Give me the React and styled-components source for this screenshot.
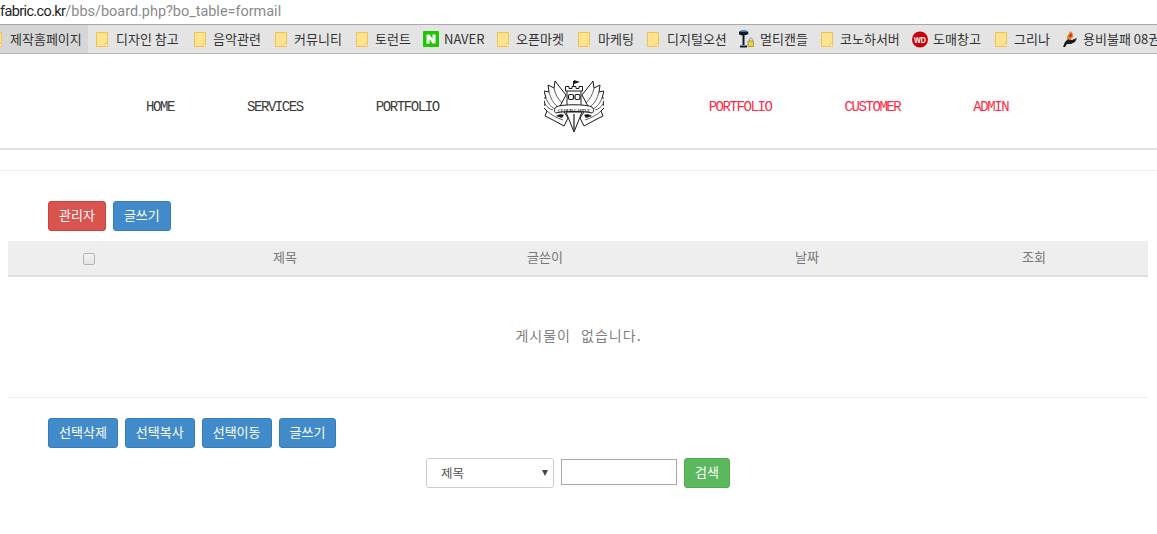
import React from "react";
import styled, { createGlobalStyle } from "styled-components";

const Global = createGlobalStyle`
  html, body { margin: 0; padding: 0; background: #fff; overflow: hidden; }
  body { font-family: "Noto Sans CJK KR", "Liberation Sans", sans-serif; }
  * { box-sizing: border-box; }
`;

const Page = styled.div`
  width: 1157px;
  height: 534px;
  overflow: hidden;
  display: flex;
  flex-direction: column;
`;

const AddressBar = styled.div`
  height: 25px;
  border-bottom: 1px solid #a9a9a9;
  font: 14.45px/24px "Roboto", "Open Sans", sans-serif;
  color: #8a8a8a;
  white-space: nowrap;
  b { font-weight: 400; color: #222; letter-spacing: -0.6px; }
`;

const BookmarkBar = styled.div`
  height: 29px;
  background: #e4e4e4;
  border-bottom: 1px solid #b4b4b4;
  display: flex;
  align-items: center;
  overflow: hidden;
  white-space: nowrap;
`;

const Bookmark = styled.div`
  flex: none;
  display: flex;
  align-items: center;
  height: 28px;
  width: ${(p) => p.$w}px;
  padding-left: ${(p) => p.$pad}px;
  gap: ${(p) => p.$gap}px;
  background: ${(p) => (p.$active ? "#d6d6d6" : "transparent")};
  font-size: 13px;
  color: #333;
  overflow: hidden;
`;

const BookmarkLabel = styled.span`
  display: block;
  line-height: 16px;
`;

const NavBar = styled.nav`
  height: 96px;
  border-bottom: 2px solid #e2e2e2;
  display: flex;
  align-items: center;
  padding: 8px 0 0 146px;
  gap: 73px;
`;

const NavLink = styled.a`
  font: 14px/16px "Liberation Mono", monospace;
  letter-spacing: -1.42px;
  color: ${(p) => (p.$accent ? "#ff2a45" : "#3c3c3c")};
  position: relative;
  top: 2px;
`;

const LogoBox = styled.div`
  flex: none;
  width: 60px;
  height: 52px;
  margin: 1px 32px 0;
`;

const Rule = styled.div`
  height: 1px;
  background: #eee;
  margin: ${(p) => p.$m};
`;

const Actions = styled.div`
  display: flex;
  gap: 7px;
  padding-left: 48px;
  margin-top: ${(p) => p.$top}px;
`;

const Button = styled.button`
  height: 30px;
  padding: 0 10px 2px;
  border-radius: 3px;
  border: 1px solid ${(p) => p.$border};
  background: ${(p) => p.$bg};
  color: #fff;
  font: 13px/16px "Noto Sans CJK KR", sans-serif;
  display: block;
`;

const Head = styled.div`
  margin: 10px 9px 0 8px;
  height: 36px;
  padding-bottom: 2px;
  background: #eee;
  border-bottom: 2px solid #ddd;
  display: grid;
  grid-template-columns: 162px 230px 290px 234px 220px;
  align-items: center;
  font-size: 13px;
  color: #777;
  text-align: center;
`;

const HeadCell = styled.div`
  line-height: 18px;
`;

const Check = styled.span`
  display: block;
  width: 12px;
  height: 12px;
  margin: 3px auto 0;
  border-radius: 2px;
  border: 1px solid #b5b5b5;
  background: linear-gradient(#f4f4f4, #e4e4e4);
`;

const Empty = styled.div`
  height: 120px;
  padding-bottom: 4px;
  display: flex;
  align-items: center;
  justify-content: center;
  font-size: 14px;
  letter-spacing: 1px;
  word-spacing: 6px;
  color: #808080;
`;

const SearchRow = styled.form`
  display: flex;
  align-items: flex-start;
  padding-left: 426px;
  margin-top: 10px;
  gap: 7px;
`;

const SelectBox = styled.div`
  width: 128px;
  height: 30px;
  border: 1px solid #ccc;
  border-radius: 3px;
  display: flex;
  align-items: center;
  justify-content: space-between;
  padding: 0 4px 2px 14px;
  font-size: 12.5px;
  color: #555;
  background: #fff;
`;

const Caret = styled.span`
  width: 0;
  height: 0;
  border-left: 3px solid transparent;
  border-right: 3px solid transparent;
  border-top: 6px solid #444;
  margin: 2px 1px 0 0;
`;

const TextInput = styled.input`
  width: 116px;
  height: 26px;
  margin-top: 1px;
  border: 1px solid #aaa;
  background: #fff;
  padding: 0;
`;

const IconSvg = styled.svg`
  display: block;
  flex: none;
  margin-left: ${(p) => p.$shift || 0}px;
`;

const Folder = ({ shift }) => (
  <IconSvg $shift={shift} width="12" height="15" viewBox="0 0 12 15">
    <path d="M.5.500h11v11l-2.500 3H.5z" fill="#ffe38f" stroke="#eac356" />
    <path d="M9 11.500h2.500v3H9z" fill="#fff3c4" stroke="#eac356" strokeWidth=".8" />
  </IconSvg>
);

const NaverIcon = () => (
  <IconSvg width="16" height="16" viewBox="0 0 16 16">
    <rect width="16" height="16" rx="1" fill="#1ec800" />
    <path d="M3.500 3.500h3l3 4.400V3.500h3v9h-3l-3-4.400v4.400h-3z" fill="#fff" />
  </IconSvg>
);

const KeyIcon = () => (
  <IconSvg width="15" height="19" viewBox="0 0 15 19">
    <path d="M0 2.500h9M0 2.500c1 2.500 8 2.500 9 0M4.500 3v12M1 16.500h7" fill="none" stroke="#0c1c2c" strokeWidth="2" />
    <path d="M1 1.500C2 .5 7 .5 8 1.500" fill="none" stroke="#1b5a8a" />
    <rect x="9" y="11" width="5.500" height="5.500" fill="#eed23c" stroke="#96821e" strokeWidth=".7" />
    <path d="M10.300 11V9.500a1.500 1.500 0 0 1 3 0V11" fill="none" stroke="#999" />
  </IconSvg>
);

const WdIcon = () => (
  <IconSvg width="16" height="17" viewBox="0 0 16 17">
    <circle cx="8" cy="8.500" r="8" fill="#c8000a" />
    <text x="8" y="11.500" textAnchor="middle" fontSize="8.500" fontWeight="700" fontFamily="Liberation Sans, sans-serif" fill="#fff" textLength="12" lengthAdjust="spacingAndGlyphs">WD</text>
  </IconSvg>
);

const FireIcon = () => (
  <IconSvg width="16" height="18" viewBox="0 0 16 18">
    <path d="M1 17l2-5 3-3 4 1 5-2-2 4-4 2-4 0-2 3z" fill="#1a1a1a" />
    <path d="M5 9C4 6 7 5 8 1c1 1 4 2 3 6-1 2-4 3-6 2z" fill="#e8862a" />
    <path d="M7 7c0-2 1-2 2-4 1 1 1 3 0 4z" fill="#c22" />
  </IconSvg>
);

const Wing = () => (
  <g>
    <path
      d="M26 19 L15 5 L14 12 L8 9 L9 16 L4 15 L6 22 L3 22 L5 28 L3 31 L7 35 L5 40 L13 44 L24 50 L28 42 L20 30 Z"
      fill="#fff"
      stroke="#1a1a1a"
      strokeWidth="1"
      strokeLinejoin="round"
    />
    <path d="M14 12c1 6 4 11 8 15M9 16c2 7 4 11 9 15M6 22c2 5 4 8 9 11M5 28c2 3 4 5 8 6M7 35c4 4 10 7 16 9" fill="none" stroke="#1a1a1a" strokeWidth=".7" />
  </g>
);

const Logo = () => (
  <svg width="60" height="52" viewBox="4 4 60 52" style={{ display: "block" }}>
    <Wing />
    <g transform="matrix(-1 0 0 1 68 0)"><Wing /></g>
    <path d="M27 14h14v18H27z" fill="#fff" stroke="#1a1a1a" strokeWidth="1" />
    <path d="M25.500 10.500h3.500v2h3v-2h4v2h3v-2h3.500v4.500h-17z" fill="#fff" stroke="#1a1a1a" strokeWidth="1" />
    <path d="M33.500 10.500V5" stroke="#1a1a1a" />
    <path d="M34 4l6 2-6 2z" fill="#1a1a1a" />
    <rect x="28.500" y="18.500" width="5" height="5" rx="1.500" fill="#fff" stroke="#1a1a1a" strokeWidth="1.200" />
    <rect x="35" y="18.500" width="5" height="5" rx="1.500" fill="#fff" stroke="#1a1a1a" strokeWidth="1.200" />
    <path d="M26 36h16l-8 20z" fill="#fff" stroke="#1a1a1a" />
    <path d="M34 38v16" stroke="#1a1a1a" strokeWidth="1.200" />
    <path d="M16 31c5-3 31-3 36 0 2 2 2 5 0 6-6-2-30-2-36 0-2-1-2-4 0-6z" fill="#fff" stroke="#1a1a1a" strokeWidth="1" />
    <text x="34" y="35.500" textAnchor="middle" fontSize="4.800" fontFamily="Liberation Serif, serif" fontWeight="700" fill="#111" textLength="32" lengthAdjust="spacingAndGlyphs">CLOUD CASTLE</text>
    <path d="M16 40c3-2 6-2 8-1l-2 3zM52 40c-3-2-6-2-8-1l2 3z" fill="#1a1a1a" />
  </svg>
);

const bookmarks = [
  { label: "제작홈페이지", icon: <Folder shift={-10} />, w: 88, pad: 0, gap: 8, active: true },
  { label: "디자인 참고", icon: <Folder />, w: 106, pad: 8, gap: 8 },
  { label: "음악관련", icon: <Folder />, w: 81, pad: 0, gap: 7 },
  { label: "커뮤니티", icon: <Folder />, w: 81, pad: 0, gap: 7 },
  { label: "토런트", icon: <Folder />, w: 67, pad: 0, gap: 7 },
  { label: "NAVER", icon: <NaverIcon />, w: 74, pad: 0, gap: 5 },
  { label: "오픈마켓", icon: <Folder />, w: 81, pad: 0, gap: 7 },
  { label: "마케팅", icon: <Folder />, w: 69, pad: 0, gap: 8 },
  { label: "디지털오션", icon: <Folder />, w: 92, pad: 0, gap: 8 },
  { label: "멀티캔들", icon: <KeyIcon />, w: 82, pad: 0, gap: 6 },
  { label: "코노하서버", icon: <Folder />, w: 91, pad: 0, gap: 7 },
  { label: "도매창고", icon: <WdIcon />, w: 83, pad: 0, gap: 5 },
  { label: "그리나", icon: <Folder />, w: 67, pad: 0, gap: 7 },
  { label: "용비불패 08권", icon: <FireIcon />, w: 120, pad: 0, gap: 5 },
];

const Blue = (p) => <Button $bg="#428bca" $border="#357ebd" {...p} />;

export default function App() {
  return (
    <Page>
      <Global />
      <AddressBar>
        <b>fabric.co.kr</b>/bbs/board.php?bo_table=formail
      </AddressBar>
      <BookmarkBar>
        {bookmarks.map((b) => (
          <Bookmark key={b.label} $w={b.w} $pad={b.pad} $gap={b.gap} $active={b.active}>
            {b.icon}
            <BookmarkLabel>{b.label}</BookmarkLabel>
          </Bookmark>
        ))}
      </BookmarkBar>
      <NavBar>
        <NavLink>HOME</NavLink>
        <NavLink>SERVICES</NavLink>
        <NavLink>PORTFOLIO</NavLink>
        <LogoBox><Logo /></LogoBox>
        <NavLink $accent>PORTFOLIO</NavLink>
        <NavLink $accent>CUSTOMER</NavLink>
        <NavLink $accent>ADMIN</NavLink>
      </NavBar>
      <Rule $m="20px 0 0" />
      <Actions $top={30}>
        <Button $bg="#d9534f" $border="#d43f3a">관리자</Button>
        <Blue>글쓰기</Blue>
      </Actions>
      <Head>
        <HeadCell><Check /></HeadCell>
        <HeadCell>제목</HeadCell>
        <HeadCell>글쓴이</HeadCell>
        <HeadCell>날짜</HeadCell>
        <HeadCell>조회</HeadCell>
      </Head>
      <Empty>게시물이 없습니다.</Empty>
      <Rule $m="0 9px 0 8px" />
      <Actions $top={20}>
        <Blue>선택삭제</Blue>
        <Blue>선택복사</Blue>
        <Blue>선택이동</Blue>
        <Blue>글쓰기</Blue>
      </Actions>
      <SearchRow>
        <SelectBox>제목<Caret /></SelectBox>
        <TextInput />
        <Button $bg="#5cb85c" $border="#4cae4c">검색</Button>
      </SearchRow>
    </Page>
  );
}
